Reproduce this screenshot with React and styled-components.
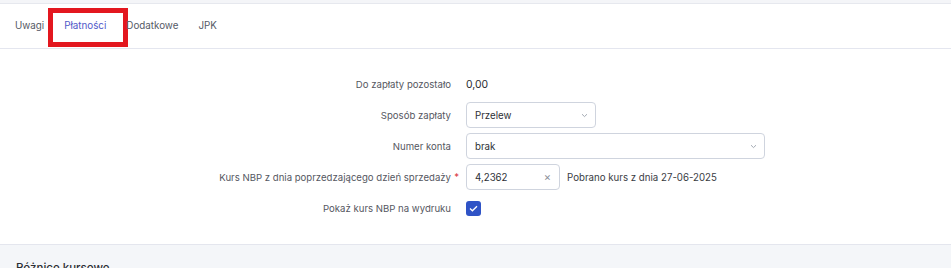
import React from "react";
import styled, { createGlobalStyle } from "styled-components";

const Global = createGlobalStyle`
  html, body { margin: 0; padding: 0; background: #ffffff; }
  body { font-family: Inter, "Noto Sans", sans-serif; -webkit-font-smoothing: antialiased; }
  * { box-sizing: border-box; }
`;

const Page = styled.div`
  width: 951px;
  height: 268px;
  overflow: hidden;
  background: #f4f5f8;
  padding-top: 3px;
`;

const Card = styled.div`
  background: #fff;
  border-top: 1px solid #e6e8ee;
`;

const TabBar = styled.nav`
  display: flex;
  align-items: stretch;
  height: 45px;
  padding: 0 5px;
  border-bottom: 1px solid #e4e6ef;
`;

const Tab = styled.div`
  position: relative;
  display: flex;
  align-items: center;
  padding: 0 10px 1px;
  font-size: 9.8px;
  color: ${(p) => (p.$active ? "#5059c9" : "#555a66")};
`;

const Highlight = styled.span`
  position: absolute;
  left: -6px;
  top: 4px;
  width: 80px;
  height: 39px;
  border: 5px solid #e3171f;
  pointer-events: none;
`;

const Form = styled.div`
  display: flex;
  flex-direction: column;
  gap: 5px;
  padding: 22px 0 23px;
`;

const Row = styled.div`
  display: grid;
  grid-template-columns: 451px auto;
  column-gap: 15px;
  align-items: center;
  height: 26px;
`;

const Label = styled.div`
  position: relative;
  text-align: right;
  font-size: 9.6px;
  color: #55575f;
  white-space: nowrap;
`;

const Req = styled.span`
  position: absolute;
  right: -8px;
  top: -1px;
  color: #d9363e;
`;

const Value = styled.div`
  display: flex;
  align-items: center;
  gap: 7px;
  font-size: 9.7px;
  color: #2d2f36;
`;

const Amount = styled.span`
  font-size: 10.4px;
  color: #2b2d33;
`;

const SelectBox = styled.div`
  display: flex;
  align-items: center;
  justify-content: space-between;
  width: ${(p) => p.$w}px;
  height: 26px;
  padding: 0 7px 0 8px;
  border: 1px solid #cfd4de;
  border-radius: 4px;
  font-size: 9.7px;
  color: #2d2f36;
`;

const Chevron = styled.svg`
  width: 7px;
  height: 5px;
`;

const InputBox = styled.div`
  display: flex;
  align-items: center;
  justify-content: space-between;
  width: 94px;
  height: 26px;
  padding: 0 8px 0 8px;
  border: 1px solid #cfd4de;
  border-radius: 4px;
  font-size: 9.7px;
  color: #2d2f36;
`;

const Clear = styled.span`
  color: #8a8f99;
  font-size: 11px;
`;

const Note = styled.span`
  font-size: 9.7px;
  color: #3a3c44;
`;

const Check = styled.div`
  width: 15px;
  height: 15px;
  border-radius: 3px;
  background: #2f53c6;
  display: flex;
  align-items: center;
  justify-content: center;
`;

const Section = styled.div`
  background: #f4f6f9;
  border-top: 1px solid #e4e6ee;
  padding: 16px 16px 0;
  font-size: 11.5px;
  font-weight: 500;
  color: #2b2d33;
`;

const ChevronIcon = () => (
  <Chevron viewBox="0 0 7 5">
    <path d="M1 1.2 L3.5 3.6 L6 1.2" fill="none" stroke="#9aa0aa" strokeWidth="0.9" />
  </Chevron>
);

export default function App() {
  return (
    <Page>
      <Global />
      <Card>
        <TabBar>
          <Tab>Uwagi</Tab>
          <Tab $active>
            Płatności
            <Highlight />
          </Tab>
          <Tab>Dodatkowe</Tab>
          <Tab>JPK</Tab>
        </TabBar>
        <Form>
          <Row>
            <Label>Do zapłaty pozostało</Label>
            <Value><Amount>0,00</Amount></Value>
          </Row>
          <Row>
            <Label>Sposób zapłaty</Label>
            <Value>
              <SelectBox $w={130}>Przelew<ChevronIcon /></SelectBox>
            </Value>
          </Row>
          <Row>
            <Label>Numer konta</Label>
            <Value>
              <SelectBox $w={299}>brak<ChevronIcon /></SelectBox>
            </Value>
          </Row>
          <Row>
            <Label>
              Kurs NBP z dnia poprzedzającego dzień sprzedaży<Req>*</Req>
            </Label>
            <Value>
              <InputBox>4,2362<Clear>×</Clear></InputBox>
              <Note>Pobrano kurs z dnia 27-06-2025</Note>
            </Value>
          </Row>
          <Row>
            <Label>Pokaż kurs NBP na wydruku</Label>
            <Value>
              <Check>
                <svg width="9" height="7" viewBox="0 0 9 7">
                  <path d="M1 3.6 L3.4 5.8 L8 1.2" fill="none" stroke="#fff" strokeWidth="1.3" />
                </svg>
              </Check>
            </Value>
          </Row>
        </Form>
      </Card>
      <Section>Różnice kursowe</Section>
    </Page>
  );
}
